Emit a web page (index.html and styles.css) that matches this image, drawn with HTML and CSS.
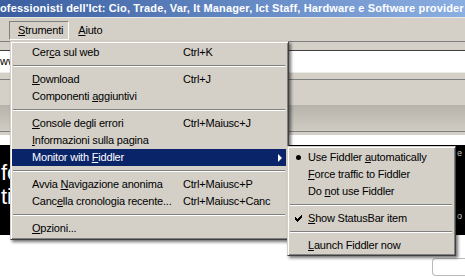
FILE: index.html
```html
<!DOCTYPE html>
<html lang="it">
<head>
  <meta charset="UTF-8">
  <title>Strumenti - Monitor with Fiddler</title>
  <link rel="stylesheet" href="styles.css">
</head>
<body>
  <div class="screen">
    <div class="titlebar">ofessionisti dell'Ict: Cio, Trade, Var, It Manager, Ict Staff, Hardware e Software provider</div>

    <div class="menubar">
      <span class="menu-title open"><u>S</u>trumenti</span>
      <span class="menu-title"><u>A</u>iuto</span>
    </div>

    <div class="navbar">
      <div class="urlfield"><span class="clip">www.zerounoweb.it/</span></div>
    </div>
    <div class="bookmarks"></div>
    <div class="tabbar"></div>
    <div class="tabline"></div>

    <div class="page">
      <div class="banner">
        <div class="banner-text">
          <div>fornitori</div>
          <div>tipologie</div>
        </div>
        <div class="banner-side">
          <span>e</span>
          <span>o</span>
        </div>
      </div>
      <div class="below">
        <div class="box"></div>
      </div>
    </div>

    <div class="menu main-menu">
      <div class="item"><span class="label">Cer<u>c</u>a sul web</span><span class="key">Ctrl+K</span></div>
      <div class="sep"></div>
      <div class="item"><span class="label"><u>D</u>ownload</span><span class="key">Ctrl+J</span></div>
      <div class="item"><span class="label">Componenti <u>a</u>ggiuntivi</span></div>
      <div class="sep"></div>
      <div class="item"><span class="label"><u>C</u>onsole degli errori</span><span class="key">Ctrl+Maiusc+J</span></div>
      <div class="item"><span class="label"><u>I</u>nformazioni sulla pagina</span></div>
      <div class="item active"><span class="label">Monitor with <u>F</u>iddler</span><span class="arrow"></span></div>
      <div class="sep"></div>
      <div class="item"><span class="label">Avvia <u>N</u>avigazione anonima</span><span class="key">Ctrl+Maiusc+P</span></div>
      <div class="item"><span class="label">Canc<u>e</u>lla cronologia recente...</span><span class="key">Ctrl+Maiusc+Canc</span></div>
      <div class="sep"></div>
      <div class="item"><span class="label"><u>O</u>pzioni...</span></div>
    </div>

    <div class="menu sub-menu">
      <div class="item"><span class="mark"><span class="bullet"></span></span><span>Use Fiddler <u>a</u>utomatically</span></div>
      <div class="item"><span class="mark"></span><span><u>F</u>orce traffic to Fiddler</span></div>
      <div class="item"><span class="mark"></span><span>Do <u>n</u>ot use Fiddler</span></div>
      <div class="sep"></div>
      <div class="item">
        <span class="mark">
          <svg width="7" height="7" viewBox="0 0 7 7"><path d="M0 2h1v1h1v1h1V3h1V2h1V1h1V0h1v3H6v1H5v1H4v1H3v1H2V6H1V5H0z" fill="#000"/></svg>
        </span><span><u>S</u>how StatusBar item</span>
      </div>
      <div class="sep"></div>
      <div class="item"><span class="mark"></span><span><u>L</u>aunch Fiddler now</span></div>
    </div>
  </div>
</body>
</html>
```

FILE: styles.css
```css
body {
  margin: 0;
  background: #fff;
  font-family: "Liberation Sans", Arial, sans-serif;
  font-size: 11px;
}

.screen {
  position: relative;
  width: 465px;
  height: 279px;
  overflow: hidden;
  background: #fff;
}

.titlebar {
  height: 17px;
  line-height: 17px;
  border-bottom: 1px solid #e9e7e1;
  background: linear-gradient(to right, #3a5e9f, #6b8fc9 60%, #8cafe2);
  color: #fff;
  font-weight: bold;
  letter-spacing: 0.15px;
  white-space: nowrap;
  overflow: hidden;
}

.menubar {
  height: 23px;
  box-sizing: border-box;
  padding: 3px 0 0 9px;
  background: #d4d0c8;
  display: flex;
}

.menu-title {
  height: 19px;
  box-sizing: border-box;
  line-height: 17px;
  padding: 0 8px;
  border: 1px solid transparent;
  letter-spacing: -0.2px;
}

.menu-title.open {
  padding: 0 5px 0 8px;
  border-color: #808080 #fff #fff #808080;
}

.navbar {
  background: #d4d0c8;
  border-top: 1px solid #808080;
  padding: 8px 0 6px;
}

.urlfield {
  height: 21px;
  line-height: 21px;
  background: #fff;
  border-top: 1px solid #404040;
  border-bottom: 1px solid #ecebe6;
}

.clip {
  display: block;
  width: 10px;
  overflow: hidden;
  white-space: nowrap;
}

.bookmarks {
  height: 25px;
  background: #d4d0c8;
  border-top: 1px solid #808080;
}

.tabbar {
  height: 26px;
  background: linear-gradient(#b7b3ab, #c6c2ba 60%, #d0ccc4);
  border-bottom: 1px solid #808080;
}

.tabline {
  height: 3px;
  background: #d4d0c8;
}

.page {
  padding-top: 10px;
  background: #fff;
}

.banner {
  height: 90px;
  background: #000;
  color: #fff;
  display: flex;
  justify-content: space-between;
}

.banner-text {
  width: 10px;
  overflow: hidden;
  padding: 16px 0 0 1px;
  font-size: 22px;
  line-height: 24px;
  white-space: nowrap;
}

.banner-side {
  display: flex;
  flex-direction: column;
  justify-content: space-between;
  padding: 3px 3px 14px 0;
  font-size: 9px;
  color: #ddd;
}

.below {
  padding-top: 23px;
}

.box {
  margin-left: 432px;
  height: 16px;
  border: 1px solid #b9b9b9;
  border-right: none;
  border-radius: 4px 0 0 4px;
}

/* menus */

.menu {
  position: absolute;
  box-sizing: border-box;
  background: #d4d0c8;
  color: #000;
  border: 1px solid;
  border-color: #d4d0c8 #404040 #404040 #d4d0c8;
  box-shadow: inset 1px 1px #fff, inset -1px -1px #808080, 2px 2px 3px rgba(0, 0, 0, 0.55);
  letter-spacing: -0.2px;
}

.main-menu {
  left: 10px;
  top: 41px;
  width: 279px;
  padding: 2px 2px 2px 1px;
}

.sub-menu {
  left: 287px;
  top: 146px;
  width: 169px;
  padding: 2px 2px 1px 1px;
}

.item {
  height: 17px;
  line-height: 17px;
  display: flex;
  align-items: center;
  white-space: nowrap;
}

.main-menu .item {
  padding-left: 20px;
}

.item .label {
  width: 151px;
}

.item.active {
  background: #0a246a;
  color: #fff;
}

.arrow {
  margin-left: auto;
  margin-right: 4px;
  width: 0;
  height: 0;
  border-left: 4px solid #fff;
  border-top: 4px solid transparent;
  border-bottom: 4px solid transparent;
}

.sep {
  height: 0;
  margin: 4px 1px;
  border-top: 1px solid #808080;
  border-bottom: 1px solid #fff;
}

.mark {
  width: 19px;
  height: 17px;
  display: flex;
  align-items: center;
  justify-content: center;
}

.bullet {
  width: 5px;
  height: 5px;
  border-radius: 50%;
  background: #000;
}
```
